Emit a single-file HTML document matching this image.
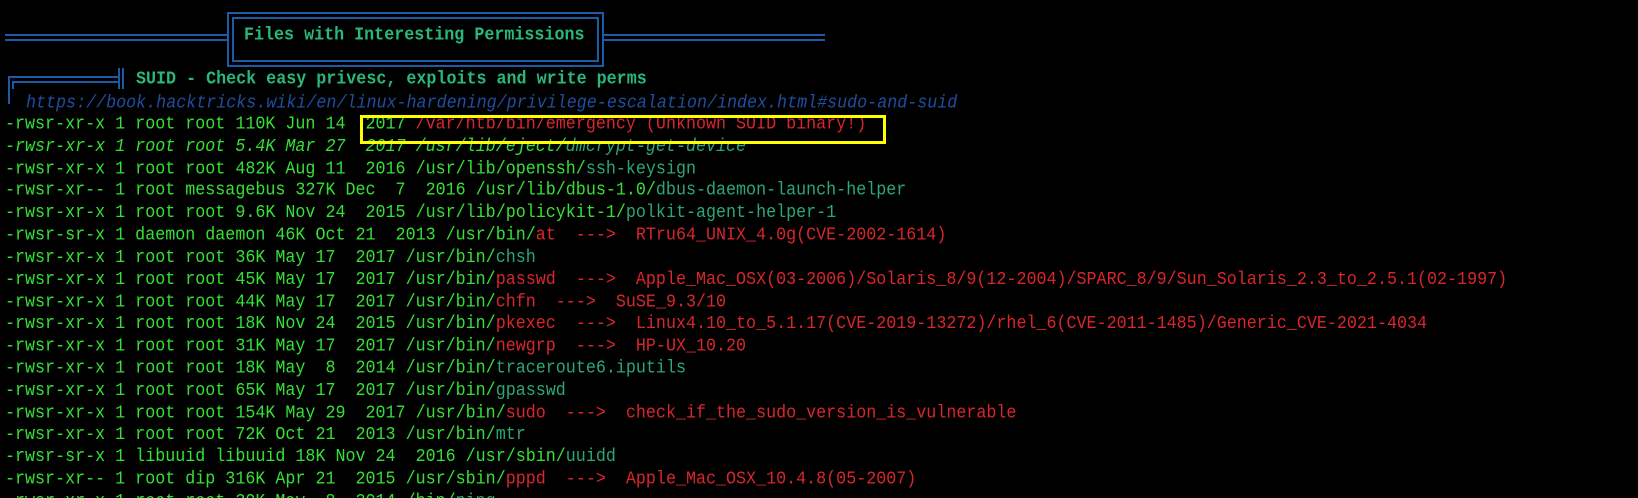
<!DOCTYPE html>
<html><head><meta charset="utf-8"><style>
html,body{margin:0;padding:0;background:#000;width:1638px;height:498px;overflow:hidden;position:relative}
.t{position:absolute;font-family:"Liberation Mono","DejaVu Sans Mono",monospace;font-size:16.7px;white-space:pre;line-height:21.4px;color:#35e035;transform:scaleY(1.12);transform-origin:0 0}
.g{color:#35e035}.r{color:#d8262c}.b{color:#2aa874}.u{color:#1f4ea0;font-style:italic}.h{color:#2ab77a;font-weight:bold}
.i{font-style:italic}
.ln{position:absolute;background:#1f5aa6}
.rows{top:114.3px;left:5px;line-height:19.82px}
</style></head><body>
<div class="ln" style="left:5px;top:34px;width:223px;height:2px"></div>
<div class="ln" style="left:5px;top:39px;width:223px;height:2px"></div>
<div class="ln" style="left:604px;top:34px;width:221px;height:2px"></div>
<div class="ln" style="left:604px;top:39px;width:221px;height:2px"></div>
<div style="position:absolute;left:227px;top:12px;width:373px;height:51px;border:2px solid #1f5aa6"></div>
<div style="position:absolute;left:232px;top:17px;width:363px;height:41px;border:2px solid #1f5aa6"></div>
<div class="t h" style="left:244px;top:24px">Files with Interesting Permissions</div>
<div class="ln" style="left:118px;top:68px;width:2px;height:21px"></div>
<div class="ln" style="left:122px;top:68px;width:2px;height:21px"></div>
<div class="ln" style="left:8px;top:76px;width:112px;height:2px"></div>
<div class="ln" style="left:12px;top:81px;width:108px;height:2px"></div>
<div class="ln" style="left:8px;top:76px;width:2px;height:28px"></div>
<div class="ln" style="left:12px;top:81px;width:2px;height:8px"></div>
<div class="t h" style="left:136px;top:68px">SUID - Check easy privesc, exploits and write perms</div>
<div class="t u" style="left:26px;top:92px">https://book.hacktricks.wiki/en/linux-hardening/privilege-escalation/index.html#sudo-and-suid</div>
<div class="t rows">-rwsr-xr-x 1 root root 110K Jun 14  2017 <span class="r">/var/htb/bin/emergency (Unknown SUID binary!)</span>
<span class="i">-rwsr-xr-x 1 root root 5.4K Mar 27  2017 /usr/lib/eject/<span class="b">dmcrypt-get-device</span></span>
-rwsr-xr-x 1 root root 482K Aug 11  2016 /usr/lib/openssh/<span class="b">ssh-keysign</span>
-rwsr-xr-- 1 root messagebus 327K Dec  7  2016 /usr/lib/dbus-1.0/<span class="b">dbus-daemon-launch-helper</span>
-rwsr-xr-x 1 root root 9.6K Nov 24  2015 /usr/lib/policykit-1/<span class="b">polkit-agent-helper-1</span>
-rwsr-sr-x 1 daemon daemon 46K Oct 21  2013 /usr/bin/<span class="r">at  ---&gt;  RTru64_UNIX_4.0g(CVE-2002-1614)</span>
-rwsr-xr-x 1 root root 36K May 17  2017 /usr/bin/<span class="b">chsh</span>
-rwsr-xr-x 1 root root 45K May 17  2017 /usr/bin/<span class="r">passwd  ---&gt;  Apple_Mac_OSX(03-2006)/Solaris_8/9(12-2004)/SPARC_8/9/Sun_Solaris_2.3_to_2.5.1(02-1997)</span>
-rwsr-xr-x 1 root root 44K May 17  2017 /usr/bin/<span class="r">chfn  ---&gt;  SuSE_9.3/10</span>
-rwsr-xr-x 1 root root 18K Nov 24  2015 /usr/bin/<span class="r">pkexec  ---&gt;  Linux4.10_to_5.1.17(CVE-2019-13272)/rhel_6(CVE-2011-1485)/Generic_CVE-2021-4034</span>
-rwsr-xr-x 1 root root 31K May 17  2017 /usr/bin/<span class="r">newgrp  ---&gt;  HP-UX_10.20</span>
-rwsr-xr-x 1 root root 18K May  8  2014 /usr/bin/<span class="b">traceroute6.iputils</span>
-rwsr-xr-x 1 root root 65K May 17  2017 /usr/bin/<span class="b">gpasswd</span>
-rwsr-xr-x 1 root root 154K May 29  2017 /usr/bin/<span class="r">sudo  ---&gt;  check_if_the_sudo_version_is_vulnerable</span>
-rwsr-xr-x 1 root root 72K Oct 21  2013 /usr/bin/<span class="b">mtr</span>
-rwsr-sr-x 1 libuuid libuuid 18K Nov 24  2016 /usr/sbin/<span class="b">uuidd</span>
-rwsr-xr-- 1 root dip 316K Apr 21  2015 /usr/sbin/<span class="r">pppd  ---&gt;  Apple_Mac_OSX_10.4.8(05-2007)</span>
-rwsr-xr-x 1 root root 30K May  8  2014 /bin/<span class="b">ping</span></div>
<div style="position:absolute;left:360px;top:115px;width:520px;height:23px;border:3px solid #ffff00"></div>
</body></html>
